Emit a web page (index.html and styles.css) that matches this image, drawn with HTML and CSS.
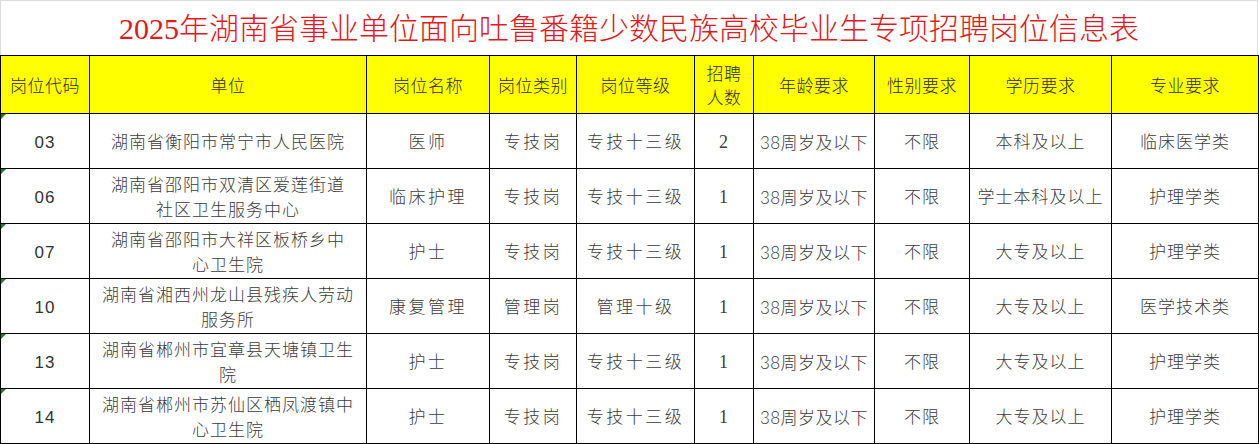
FILE: index.html
```html
<!DOCTYPE html>
<html lang="zh-CN">
<head>
<meta charset="utf-8">
<title>岗位信息表</title>
<link rel="stylesheet" href="styles.css">
</head>
<body>
<div class="sheet">
  <div class="title">2025年湖南省事业单位面向吐鲁番籍少数民族高校毕业生专项招聘岗位信息表</div>
  <table class="grid">
    <colgroup>
      <col class="c1"><col class="c2"><col class="c3"><col class="c4"><col class="c5">
      <col class="c6"><col class="c7"><col class="c8"><col class="c9"><col class="c10">
    </colgroup>
    <thead>
      <tr class="head">
        <th>岗位代码</th><th>单位</th><th>岗位名称</th><th>岗位类别</th><th>岗位等级</th>
        <th class="two">招聘<br>人数</th><th>年龄要求</th><th>性别要求</th><th>学历要求</th><th>专业要求</th>
      </tr>
    </thead>
    <tbody>
      <tr>
        <td class="code">03</td><td class="unit">湖南省衡阳市常宁市人民医院</td><td class="wide">医师</td><td class="wide">专技岗</td><td class="wide">专技十三级</td>
        <td class="num">2</td><td class="age">38周岁及以下</td><td>不限</td><td>本科及以上</td><td>临床医学类</td>
      </tr>
      <tr>
        <td class="code">06</td><td class="unit">湖南省邵阳市双清区爱莲街道<br>社区卫生服务中心</td><td class="wide">临床护理</td><td class="wide">专技岗</td><td class="wide">专技十三级</td>
        <td class="num">1</td><td class="age">38周岁及以下</td><td>不限</td><td>学士本科及以上</td><td>护理学类</td>
      </tr>
      <tr>
        <td class="code">07</td><td class="unit">湖南省邵阳市大祥区板桥乡中<br>心卫生院</td><td class="wide">护士</td><td class="wide">专技岗</td><td class="wide">专技十三级</td>
        <td class="num">1</td><td class="age">38周岁及以下</td><td>不限</td><td>大专及以上</td><td>护理学类</td>
      </tr>
      <tr>
        <td class="code">10</td><td class="unit">湖南省湘西州龙山县残疾人劳动<br>服务所</td><td class="wide">康复管理</td><td class="wide">管理岗</td><td class="wide">管理十级</td>
        <td class="num">1</td><td class="age">38周岁及以下</td><td>不限</td><td>大专及以上</td><td>医学技术类</td>
      </tr>
      <tr>
        <td class="code">13</td><td class="unit">湖南省郴州市宜章县天塘镇卫生<br>院</td><td class="wide">护士</td><td class="wide">专技岗</td><td class="wide">专技十三级</td>
        <td class="num">1</td><td class="age">38周岁及以下</td><td>不限</td><td>大专及以上</td><td>护理学类</td>
      </tr>
      <tr>
        <td class="code">14</td><td class="unit">湖南省郴州市苏仙区栖凤渡镇中<br>心卫生院</td><td class="wide">护士</td><td class="wide">专技岗</td><td class="wide">专技十三级</td>
        <td class="num">1</td><td class="age">38周岁及以下</td><td>不限</td><td>大专及以上</td><td>护理学类</td>
      </tr>
    </tbody>
  </table>
</div>
</body>
</html>
```

FILE: styles.css
```css
html, body {
  margin: 0;
  padding: 0;
  background: #ffffff;
}

.sheet {
  width: 1258px;
  font-family: "Liberation Sans", "Noto Sans CJK SC", sans-serif;
}

.title {
  box-sizing: border-box;
  height: 55px;
  border-top: 1px solid #dcdcdc;
  border-left: 1px solid #dcdcdc;
  border-right: 1px solid #dcdcdc;
  display: flex;
  align-items: center;
  justify-content: center;
  padding-bottom: 4px;
  font-family: "Liberation Serif", "Noto Sans CJK SC", serif;
  font-size: 30px;
  font-weight: 300;
  color: #e11a20;
}

.grid {
  width: 1258px;
  table-layout: fixed;
  border-collapse: collapse;
  font-size: 17px;
  font-weight: 300;
  color: #3c3c3c;
}

.c1 { width: 89px; }
.c2 { width: 277px; }
.c3 { width: 123px; }
.c4 { width: 87px; }
.c5 { width: 118px; }
.c6 { width: 59px; }
.c7 { width: 121px; }
.c8 { width: 95px; }
.c9 { width: 142px; }
.c10 { width: 147px; }

.grid th,
.grid td {
  border: 1px solid #000000;
  text-align: center;
  vertical-align: middle;
  letter-spacing: 1px;
  overflow: hidden;
  white-space: nowrap;
}

.head th {
  height: 53px;
  padding: 4px 0 0 0;
  line-height: 26px;
  background: #ffff00;
  color: #2e2e14;
  font-weight: 300;
  letter-spacing: 0.5px;
}

.head th.two {
  line-height: 24px;
}

.grid tbody td {
  height: 51px;
  padding: 3px 0 0 0;
  line-height: 25px;
}

.grid td.unit {
  letter-spacing: 1px;
  line-height: 25px;
}

.grid td.wide {
  letter-spacing: 2.5px;
}

.grid td.num {
  font-family: "Liberation Serif", "Noto Sans CJK SC", serif;
  font-size: 18px;
}

.grid td.age {
  font-family: "Lato", "Noto Sans CJK SC", sans-serif;
  letter-spacing: 0.5px;
}

.grid td.code {
  position: relative;
  font-family: "Liberation Sans", "Noto Sans CJK SC", sans-serif;
  font-weight: 400;
  color: #333333;
}

.grid td.code::before {
  content: "";
  position: absolute;
  left: 0;
  top: 0;
  width: 0;
  height: 0;
  border-top: 5px solid #1f7a2a;
  border-right: 5px solid transparent;
}
```
